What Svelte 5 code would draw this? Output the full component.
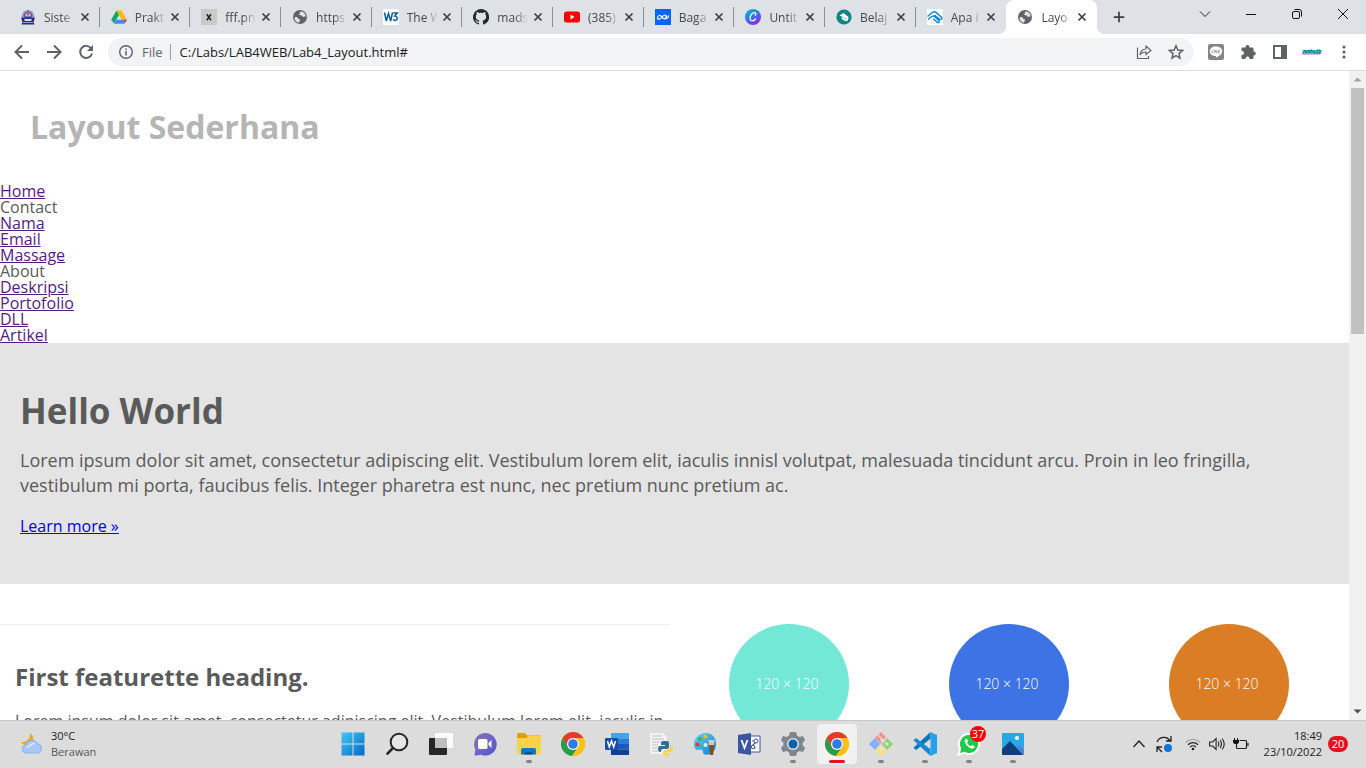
<script>
  const tabs = [
    { icon: 'crest', title: 'Siste' },
    { icon: 'drive', title: 'Prakt' },
    { icon: 'x', title: 'fff.pn' },
    { icon: 'globe', title: 'https' },
    { icon: 'w3', title: 'The W' },
    { icon: 'github', title: 'mads' },
    { icon: 'youtube', title: '(385)' },
    { icon: 'wave', title: 'Baga' },
    { icon: 'canva', title: 'Untit' },
    { icon: 'learn', title: 'Belaj' },
    { icon: 'clip', title: 'Apa i' },
    { icon: 'globe', title: 'Layo', active: true }
  ];

  const nav = [
    { label: 'Home', link: true },
    { label: 'Contact' },
    { label: 'Nama', link: true },
    { label: 'Email', link: true },
    { label: 'Massage', link: true },
    { label: 'About' },
    { label: 'Deskripsi', link: true },
    { label: 'Portofolio', link: true },
    { label: 'DLL', link: true },
    { label: 'Artikel', link: true }
  ];

  const circles = ['teal', 'blue', 'orange'];

  const apps = [
    { id: 'start', name: 'Start' },
    { id: 'search', name: 'Search' },
    { id: 'tasks', name: 'Task view' },
    { id: 'chat', name: 'Chat' },
    { id: 'files', name: 'File Explorer', open: true },
    { id: 'chrome', name: 'Chrome' },
    { id: 'word', name: 'Word' },
    { id: 'python', name: 'Python' },
    { id: 'paint', name: 'Paint' },
    { id: 'visio', name: 'Visio' },
    { id: 'settings', name: 'Settings', open: true },
    { id: 'chrome', name: 'Chrome window', open: true, active: true },
    { id: 'git', name: 'Git', open: true },
    { id: 'code', name: 'Code', open: true },
    { id: 'whatsapp', name: 'WhatsApp', open: true, badge: 37 },
    { id: 'photos', name: 'Photos', open: true }
  ];
</script>

{#snippet favicon(id)}
  <svg class="favicon" viewBox="0 0 16 16" aria-hidden="true">
    {#if id === 'crest'}
      <path d="M8 .5l2 1.200 2.500.8.8 2.500 1.200 2-1 3H2.500l-1-3 1.200-2 .8-2.500L6 1.700z" fill="#8f92bb" />
      <path d="M8 1.500l4 3.500v5H4V5z" fill="#5b5f9e" />
      <path d="M8 3l2.500 2.500V10h-5V5.500z" fill="#c9c8e0" />
      <path d="M7 3.500h2v3H7z" fill="#e2574c" />
      <path d="M1 8.500l3.500.5v3h7V9l3.500-.5-1.500 4.500 1 2.500h-13l1-2.500z" fill="#23287c" />
      <path d="M5 7.500h6V10H5z" fill="#2f3590" />
      <path d="M3 13.500h10" stroke="#c3c5df" stroke-width=".8" />
    {:else if id === 'drive'}
      <path d="M5.500 1.500h5L16 11h-5z" fill="#ffba00" />
      <path d="M5.500 1.500L8 6 3 14.500.2 10.700z" fill="#0da960" />
      <path d="M5.200 10.700H16l-2.700 4H3z" fill="#4688f4" />
      <path d="M12.900 10.700H16l-2 3.200z" fill="#ea4335" />
    {:else if id === 'x'}
      <path d="M0 0h16v16H0z" fill="#c9c9c9" />
      <path d="M5.800 5.200l4.200 6M10 5.200l-4.200 6" stroke="#222" stroke-width="1.500" />
    {:else if id === 'globe'}
      <circle cx="8" cy="8" r="7" fill="#5f6368" />
      <path d="M2.600 8.200c1.700-.4 3 .2 3.500 1.200.5.900 2.200.4 2 1.700-.1 1-1.200 1.300-1 2.300l-.5.4C4 13.200 2.300 11 2.600 8.200zM9 2.400c-1 .2-1.400.8-1 1.400.4.600-.9.900-.8 1.700.1.900 1.600.3 2.200 1 .7.900 1.900 1.800 3 1.100.6-.4 1.100-.2 1.300.3.3-2.700-1.700-5.300-4.700-5.500z" fill="#dee1e6" />
    {:else if id === 'w3'}
      <rect width="16" height="16" rx="1" fill="#fff" />
      <path d="M1.500 3.500l1.800 8.500 2.200-7.500 2.200 7.500 1.800-8.500M10.300 4h4l-2.500 3c3.200-.1 3.200 4.500.1 4.500-.9 0-1.400-.4-1.700-1.200" fill="none" stroke="#0f5c9a" stroke-width="1.500" />
    {:else if id === 'github'}
      <path d="M8 0a8 8 0 0 0-2.500 15.600c.4.100.5-.2.500-.4v-1.500c-2.200.5-2.700-1-2.700-1-.4-.9-.9-1.200-.9-1.200-.7-.5.100-.5.100-.5.800.1 1.200.8 1.200.8.7 1.200 1.900.9 2.300.7.100-.5.300-.9.500-1.100-1.800-.2-3.600-.9-3.600-4 0-.9.300-1.600.8-2.200-.1-.2-.4-1 .1-2.100 0 0 .7-.2 2.200.8a7.700 7.700 0 0 1 4 0c1.500-1 2.200-.8 2.200-.8.500 1.100.2 1.900.1 2.100.5.600.8 1.300.8 2.200 0 3.100-1.800 3.800-3.600 4 .3.200.5.700.5 1.500v2.300c0 .2.200.5.600.4A8 8 0 0 0 8 0z" fill="#24292f" />
    {:else if id === 'youtube'}
      <rect y="2.500" width="16" height="11" rx="2.500" fill="#f00" />
      <path d="M6.500 5.500v5l4-2.500z" fill="#fff" />
    {:else if id === 'wave'}
      <path d="M0 0h16v16H0z" fill="#0765ff" />
      <path d="M2.300 9.300C2.800 6.300 5 5.500 6.300 7.300 7.500 9 8.200 10 9.700 9.900c2-.1 3.500-1 4-3.100M2.300 9.300c1 1.500 2.800.9 3.800-.2L8.500 6.700c1-1 2.500-1 3 .3.300.8-.5 1.500-1.200 1" fill="none" stroke="#fff" stroke-width="1.200" stroke-linecap="round" />
    {:else if id === 'canva'}
      <defs><linearGradient id="canva-fill" x2=".6" y2="1"><stop stop-color="#00c4cc" /><stop offset=".5" stop-color="#2f7be5" /><stop offset="1" stop-color="#8b2be8" /></linearGradient></defs>
      <circle cx="8" cy="8" r="8" fill="url(#canva-fill)" />
      <path d="M10.300 6.200c1.200-1.600.3-2.800-1.300-2.500-2.600.5-4.400 3.700-3.800 6.400.5 2.500 3.600 2.500 5.300-.2" fill="none" stroke="#fff" stroke-width="1.300" stroke-linecap="round" />
    {:else if id === 'learn'}
      <circle cx="8" cy="8" r="7.600" fill="#0e8484" />
      <path d="M3.500 6.500l4-2.500 5 4-.5 3.500-2.500.8-4-2.500.5-2z" fill="#fff" />
      <path d="M5.500 7.500l5 3" stroke="#0e8484" stroke-width=".5" />
    {:else if id === 'clip'}
      <path d="M0 0h16v16H0z" fill="#fff" />
      <path d="M.5 7.500L5.500 3.300c1.300-1 2.500-.8 3.800.3l5 4.400c1.400 1.500-.5 3.300-2 2L7.500 6M1 10.500l3.700-3c1.100-.8 2.100-.7 3 .1l4.300 4.200c.8 1.300-.8 2.500-1.900 1.500L6.200 9.700" fill="none" stroke="#168bd2" stroke-width="1.500" />
    {/if}
  </svg>
{/snippet}

{#snippet appIcon(id)}
  <svg class="app-icon" viewBox="0 0 24 24" aria-hidden="true">
    {#if id === 'start'}
      <defs><linearGradient id="win" x2="1" y2="1"><stop stop-color="#3fc8f8" /><stop offset="1" stop-color="#0467c8" /></linearGradient></defs>
      <path d="M.5.500h11v11H.500zM12.500.500h11v11h-11zM.5 12.500h11v11H.500zM12.500 12.500h11v11h-11z" fill="url(#win)" />
    {:else if id === 'search'}
      <circle cx="14" cy="10" r="8.300" fill="#e6e6e6" stroke="#262626" stroke-width="2" />
      <path d="M8 16l-5.500 5.700" stroke="#262626" stroke-width="2.600" stroke-linecap="round" />
    {:else if id === 'tasks'}
      <rect y="6" width="18" height="17" rx="1" fill="#272727" />
      <rect x="6" y="1" width="18" height="15" rx="1" fill="#fff" opacity=".88" />
      <path d="M6 6h12v10H6z" fill="#bebebe" />
    {:else if id === 'chat'}
      <defs><linearGradient id="chat" x2="1" y2="1"><stop stop-color="#8d6fa9" /><stop offset=".45" stop-color="#7166c6" /><stop offset="1" stop-color="#4f55c8" /></linearGradient></defs>
      <path d="M12 1a11.300 11.300 0 1 1-4 21.700l-6.500 1 .9-6A11.300 11.300 0 0 1 12 1z" fill="url(#chat)" />
      <rect x="5" y="7" width="9.500" height="10" rx="1.500" fill="#fff" />
      <path d="M15.500 11l3-3v8l-3-3z" fill="#fff" />
    {:else if id === 'files'}
      <path d="M0 2.500Q0 1 1.500 1H8l2 2.500h14V7H0z" fill="#dda106" />
      <path d="M0 6h9l2-2h12q1 0 1 1v16.500q0 1-1 1H1q-1 0-1-1z" fill="#ffd04a" />
      <path d="M4 22.500V18q0-2 2-2h11q2 0 2 2v4.500z" fill="#1277c8" />
      <path d="M7.500 22.500V20h8v2.500z" fill="#075597" />
    {:else if id === 'chrome'}
      <circle cx="12" cy="12" r="12" fill="#fbc116" />
      <path d="M12 12L6.600 15.100 1.600 6A12 12 0 0 1 22.400 6H12z" fill="#e33b2e" />
      <path d="M12 12L6.800 15 1.600 6A12 12 0 0 0 11 24l6.200-9z" fill="#279c4c" />
      <path d="M12 12V6h10.400A12 12 0 0 1 11 24l6.200-9z" fill="#fbc116" />
      <circle cx="12" cy="12" r="6" fill="#fff" /><circle cx="12" cy="12" r="4.800" fill="#2d7be9" />
    {:else if id === 'word'}
      <path d="M6 1h18v5.500H6z" fill="#41a5ee" /><path d="M6 6.500h18V12H6z" fill="#2b7cd3" /><path d="M6 12h18v5.500H6z" fill="#185abd" /><path d="M6 17.500h18V23H6z" fill="#103f91" />
      <rect y="6" width="13" height="12" rx="1" fill="#174ea6" />
      <path d="M2.500 9l1.800 6 2.200-6 2.200 6 1.800-6" fill="none" stroke="#fff" stroke-width="1.500" />
    {:else if id === 'python'}
      <path d="M1 1h13l4 4v17H1z" fill="#f2f2f2" />
      <path d="M3 4h10M3 7h12M3 10h8M3 13h6M3 16h5M3 19h7" stroke="#c0c0c0" stroke-width="1" />
      <path d="M14 9h4q2 0 2 2v4q0 2-2 2h-4q-2 0-2 2v1h-1q-2-.5-2-3.500T11 14h5v-1h-4v-2q0-2 2-2z" fill="#2f6c9f" />
      <path d="M21 13h1q2 .5 2 3.500T22 20h-5v1h4v1q0 2-3 2t-4-2v-2q0-2 2-2h3q2 0 2-2z" fill="#ffd342" />
    {:else if id === 'paint'}
      <defs><linearGradient id="paint" x2="1" y2="1"><stop stop-color="#60d8f5" /><stop offset="1" stop-color="#127bcd" /></linearGradient></defs>
      <path d="M13 1C6 1 1 6 1 12c0 4 1.500 6.500 4.500 5.800 3-.8 4.500 0 4.500 2.200 0 2.500 2 3 5 2.600 5-.8 8-5 8-10.600C23 5.500 19 1 13 1z" fill="url(#paint)" />
      <circle cx="12.500" cy="4.500" r="2" fill="#f5b526" /><circle cx="7" cy="7" r="2" fill="#54a63d" /><circle cx="4.500" cy="12.500" r="2" fill="#df3f32" /><circle cx="12.500" cy="13" r="2" fill="#dff3fb" />
      <path d="M16 8h5v6h-5z" fill="#e8c796" /><path d="M15.500 8h6v2.500h-6z" fill="#c9ced1" /><path d="M16 13h5l-.8 10h-3z" fill="#854d1c" />
    {:else if id === 'visio'}
      <path d="M12 4h11v16H12z" fill="#fff" stroke="#4256a2" />
      <path d="M15 9h4M15 14l4-4M15 16h4" stroke="#4256a2" stroke-width="1.200" /><circle cx="19" cy="9" r="2" fill="#fff" stroke="#4256a2" /><circle cx="16" cy="15" r="1.700" fill="#fff" stroke="#4256a2" />
      <path d="M1 3l13-2v22L1 21z" fill="#3955a3" />
      <path d="M4.500 8l3 8 3-8" fill="none" stroke="#fff" stroke-width="1.800" />
    {:else if id === 'settings'}
      <path d="M9 0h6l1 3.500 2.500 1.400L22 4l2 4-2.500 3v2l2.500 3-2 4-3.500-.9-2.500 1.400L15 24H9l-1-3.500-2.500-1.400L2 20l-2-4 2.500-3v-2L0 8l2-4 3.500.9L8 3.500z" fill="#7d868d" />
      <circle cx="12" cy="12" r="6" fill="#d9e3e9" /><circle cx="12" cy="12" r="4.500" fill="#0962a9" />
    {:else if id === 'git'}
      <path d="M12 0l5 5-4 4 3 3-2 2-8-8z" fill="#fa8d86" /><path d="M6 6l5 6-5 6-6-6z" fill="#80b2ff" /><path d="M18 6l6 6-6 6-5-6z" fill="#8fd27b" /><path d="M12 13l6 5-6 6-6-6z" fill="#ffe07c" />
      <path d="M9 3l4 4v10M13 8l5 4" fill="none" stroke="#ddd" stroke-width="1.300" /><circle cx="13" cy="8" r="1.600" fill="#e5e5e5" /><circle cx="18" cy="12" r="1.600" fill="#e5e5e5" /><circle cx="12" cy="17" r="1.600" fill="#e5e5e5" />
    {:else if id === 'code'}
      <path d="M17.500 0v6.800L3 18l-2.500-2.300L17.500 0z" fill="#0877bd" />
      <path d="M.5 8.300L3 6l14.500 11.300V24z" fill="#108bd4" />
      <path d="M17.500 0L24 3v18l-6.500 3z" fill="#27a0ef" />
    {:else if id === 'whatsapp'}
      <path d="M12 1a11 11 0 1 1-5 20.800L0 24l2-7A11 11 0 0 1 12 1z" fill="#fff" />
      <path d="M12 3a9 9 0 1 1-4.500 16.800L3 21l1.200-4.500A9 9 0 0 1 12 3z" fill="#25c84b" />
      <path d="M8.300 7c-3 3 4.500 11 8.200 9.300 1.500-.8 1.200-2 .6-2.400l-1.900-1c-.9.2-1 1.400-2 1-1.500-.7-2.500-1.900-3-3 0-.8 1-1.100.8-1.900L10 7.100C9.600 6.500 8.900 6.500 8.300 7z" fill="#fff" />
    {:else if id === 'photos'}
      <rect x="1" y="1" width="22" height="22" rx="1" fill="#27a9e9" />
      <path d="M11 20l7-7 5 5v4H10z" fill="#4d82d5" />
      <path d="M1 17L9 9l13 14H2q-1 0-1-1z" fill="#123f7c" /><circle cx="16" cy="6" r="2" fill="#fff" />
    {/if}
  </svg>
{/snippet}

<div class="screen">
  <header class="tabstrip">
    <div class="tabs">
      {#each tabs as tab, i}
        <div class="tab" class:active={tab.active} class:before={i === tabs.length - 2}>
          {@render favicon(tab.icon)}
          <span class="tab-title">{tab.title}</span>
          <button class="close" aria-label="Close tab">
            <svg viewBox="0 0 16 16"><path d="M4.500 4.500l7 7M11.500 4.500l-7 7" stroke="#3c4043" stroke-width="1.700" /></svg>
          </button>
        </div>
      {/each}
    </div>
    <button class="new-tab" aria-label="New tab"><svg viewBox="0 0 16 16"><path d="M8 2v12M2 8h12" stroke="#3c4043" stroke-width="2" /></svg></button>
    <div class="window-controls">
      <button aria-label="Search tabs"><svg viewBox="0 0 16 16"><path d="M3 5.500l5 5 5-5" fill="none" stroke="#222" /></svg></button>
      <button aria-label="Minimize"><svg viewBox="0 0 16 16"><path d="M3 8.500h10" stroke="#111" /></svg></button>
      <button aria-label="Restore"><svg viewBox="0 0 16 16"><rect x="3.500" y="5.500" width="7" height="7" rx="1.500" fill="none" stroke="#111" /><path d="M5.500 3.500H10q2.500 0 2.500 2.500v4.500" fill="none" stroke="#111" /></svg></button>
      <button aria-label="Close window"><svg viewBox="0 0 16 16"><path d="M3 3l10 10M13 3L3 13" stroke="#111" /></svg></button>
    </div>
  </header>

  <div class="toolbar">
    <div class="nav-buttons">
      <button aria-label="Back"><svg viewBox="0 0 16 16"><path d="M15 8H2M8 1.500L1.500 8 8 14.500" fill="none" stroke="#5f6368" stroke-width="2" /></svg></button>
      <button aria-label="Forward"><svg viewBox="0 0 16 16"><path d="M1 8h13M8 1.500L14.500 8 8 14.500" fill="none" stroke="#5f6368" stroke-width="2" /></svg></button>
      <button aria-label="Reload"><svg viewBox="0 0 16 16"><path d="M13.200 4.500A6 6 0 1 0 14 9.500" fill="none" stroke="#5f6368" stroke-width="2" /><path d="M15 1v6H9z" fill="#5f6368" /></svg></button>
    </div>
    <div class="omnibox">
      <svg viewBox="0 0 16 16" aria-hidden="true"><circle cx="8" cy="8" r="6.300" fill="none" stroke="#5f6368" stroke-width="1.400" /><path d="M8 7v4.500M8 4.500V6" stroke="#5f6368" stroke-width="1.500" /></svg>
      <span class="scheme">File</span>
      <input aria-label="Address" value="C:/Labs/LAB4WEB/Lab4_Layout.html#" />
      <button aria-label="Share"><svg viewBox="0 0 16 16"><path d="M1.500 3.500v11h11V12" fill="none" stroke="#5f6368" stroke-width="1.200" /><path d="M4 11c.5-4 2.500-6 6-6V2l5 4.500L10 10.500V8c-3 0-4.500.5-6 3z" fill="none" stroke="#5f6368" stroke-width="1.100" /></svg></button>
      <button aria-label="Bookmark"><svg viewBox="0 0 16 16"><path d="M8 1.800l1.800 4.300 4.700.4-3.500 3.100 1 4.500L8 11.700l-4 2.400 1-4.500-3.500-3.100 4.700-.4z" fill="none" stroke="#5f6368" stroke-width="1.500" /></svg></button>
    </div>
    <div class="extensions">
      <button aria-label="Line"><svg viewBox="0 0 16 16"><rect width="16" height="16" rx="2" fill="#858585" /><path d="M8 2.500c4 0 6.300 2.200 6.300 5 0 3-4.300 5-6.300 6.300v-1.700C4.200 12 1.700 10 1.700 7.400 1.700 4.500 4.500 2.500 8 2.500z" fill="#fff" /><path d="M4 6v3h1.300M6.200 6v3M7.300 9V6l1.600 3V6M12 6h-1.500v3H12M10.500 7.500H12" fill="none" stroke="#858585" stroke-width=".6" /></svg></button>
      <button aria-label="Extensions"><svg viewBox="0 0 16 16"><path d="M1.500 4.500q0-1 1-1h3V3a2 2 0 0 1 4 0v.5h3q1 0 1 1v3h.300a2 2 0 0 1 0 4h-.3V14q0 1-1 1H9.500v-.5a2 2 0 0 0-4 0v.5h-3q-1 0-1-1v-3H2a2 2 0 0 0 0-4h-.500z" fill="#5f6368" /></svg></button>
      <button aria-label="Side panel"><svg viewBox="0 0 16 16"><path d="M1 1h14v14H1zM3 3v10h6V3z" fill="#5f6368" fill-rule="evenodd" /></svg></button>
      <button class="profile" aria-label="Profile"><svg viewBox="0 0 20 16"><path d="M1 6h19l-1 4H0z" fill="#35cbd4" /><path d="M1 9l2-3 1 3 2-3 1 3M8 9V6h2v3M12 6v3h2M15 9V6h3v3z" fill="none" stroke="#255d66" stroke-width=".8" /><path d="M0 10.500h18" stroke="#b87386" stroke-width=".5" /></svg></button>
      <button aria-label="Menu"><svg viewBox="0 0 16 16"><g fill="#5f6368"><circle cx="8" cy="3" r="1.600" /><circle cx="8" cy="8" r="1.600" /><circle cx="8" cy="13" r="1.600" /></g></svg></button>
    </div>
  </div>

  <div class="viewport">
    <div class="document">
      <header class="site-header"><h1>Layout Sederhana</h1></header>
      <nav>
        <ul>
          {#each nav as item}
            <li>{#if item.link}<a class="visited" href="#top">{item.label}</a>{:else}{item.label}{/if}</li>
          {/each}
        </ul>
      </nav>
      <section class="hero">
        <h1>Hello World</h1>
        <p>Lorem ipsum dolor sit amet, consectetur adipiscing elit. Vestibulum lorem elit, iaculis innisl volutpat, malesuada tincidunt arcu. Proin in leo fringilla, vestibulum mi porta, faucibus felis. Integer pharetra est nunc, nec pretium nunc pretium ac.</p>
        <a href="#more">Learn more »</a>
      </section>
      <main>
        <article>
          <h2>First featurette heading.</h2>
          <p>Lorem ipsum dolor sit amet, consectetur adipiscing elit. Vestibulum lorem elit, iaculis in</p>
        </article>
        <div class="boxes">
          {#each circles as colour}
            <div class="box"><div class="circle {colour}">120 × 120</div></div>
          {/each}
        </div>
      </main>
    </div>
    <div class="scrollbar" aria-hidden="true">
      <svg viewBox="0 0 17 17"><path d="M4.500 10.500h8l-4-4z" fill="#a3a3a3" /></svg>
      <div class="track"><div class="thumb"></div></div>
      <svg viewBox="0 0 17 17"><path d="M4.500 6.500h8l-4 4z" fill="#505050" /></svg>
    </div>
  </div>

  <footer class="taskbar">
    <button class="weather">
      <svg viewBox="0 0 24 24" aria-hidden="true"><path d="M10 1c5 3 4 9.500-1 11.500-3 1-6 .5-8-2.500C7 10.500 10.500 6.500 10 1z" fill="#f5a623" /><path d="M6.500 21a4 4 0 0 1-.5-8 6 6 0 0 1 11.300-1.500A5 5 0 0 1 18.500 21z" fill="#a9c8f6" stroke="#7da5e6" stroke-width=".8" /><path d="M7 16c1-3 3-2 3-2s2-4 5-2" fill="none" stroke="#dbe9ff" stroke-width="1.500" /></svg>
      <span class="weather-text"><span>30°C</span><span class="muted">Berawan</span></span>
    </button>
    <div class="apps">
      {#each apps as app}
        <button class="app" class:open={app.open} class:current={app.active} aria-label={app.name}>
          {@render appIcon(app.id)}
          {#if app.badge}<span class="badge">{app.badge}</span>{/if}
        </button>
      {/each}
    </div>
    <div class="tray">
      <button aria-label="Hidden icons"><svg viewBox="0 0 16 16"><path d="M2.500 11L8 5l5.500 6" fill="none" stroke="#222" stroke-width="1.300" /></svg></button>
      <button class="update" aria-label="Update"><svg viewBox="0 0 18 18"><path d="M2 7a7.500 7.500 0 0 1 13-1.500M16 1v5h-5M2 17v-5h5M2.500 12.500L7 17" fill="none" stroke="#222" stroke-width="1.300" /><circle cx="13" cy="13" r="4" fill="#0878d4" /></svg></button>
      <button class="status" aria-label="Network, volume and battery">
        <svg viewBox="0 0 16 16"><path d="M.8 6.500a10 10 0 0 1 14.400 0" fill="none" stroke="#aaa" stroke-width="1.200" /><path d="M3 8.800a7 7 0 0 1 10 0M5.200 11a4 4 0 0 1 5.600 0" fill="none" stroke="#222" stroke-width="1.300" /><circle cx="8" cy="13" r="1.300" fill="#222" /></svg>
        <svg viewBox="0 0 16 16"><path d="M.6 6h3l3.500-3.500v11L3.600 10h-3zM9 5.500q1.800 2.500 0 5M11 4q3 4 0 8M13 2.500q4.500 5.500 0 11" fill="none" stroke="#222" stroke-width="1.100" /></svg>
        <svg viewBox="0 0 16 16"><path d="M6.500 4.500h6q1 0 1 1v6q0 1-1 1h-8q-1 0-1-1V8M15 7v3" fill="none" stroke="#222" stroke-width="1.200" /><path d="M0 4h6v2.500L4.500 8h-3L0 6.500zM1 2h1v2H1zM4 2h1v2H4z" fill="#111" /></svg>
      </button>
      <button class="clock"><span>18:49</span><span>23/10/2022</span></button>
      <button class="notices" aria-label="Notifications">20</button>
    </div>
  </footer>
</div>

<style>
  :global(body) { margin: 0; }
  .screen { height: 100vh; display: flex; flex-direction: column; overflow: hidden; background: #fff; font-family: "Open Sans", sans-serif; }
  .screen * { box-sizing: border-box; }
  button { border: 0; padding: 0; background: none; font: inherit; color: inherit; display: flex; align-items: center; justify-content: center; flex: none; }
  svg { display: block; width: 16px; height: 16px; flex: none; }
  h1, h2, p, ul { margin: 0; padding: 0; }

  .tabstrip { flex: none; height: 34px; display: flex; background: #dee1e6; padding-left: 9px; }
  .tabs { flex: 1; min-width: 0; display: flex; }
  .tab { position: relative; flex: 1; min-width: 0; display: flex; align-items: center; padding: 0 7px 0 11px; font-family: "Open Sans", sans-serif; font-size: 12px; color: #45494d; }
  .tab::after { content: ""; position: absolute; right: 0; top: 7px; width: 1px; height: 20px; background: #8a8d91; }
  .tab.before::after { display: none; }
  .tab.active { background: #fff; border-radius: 8px 8px 0 0; }
  .tab.active::after { right: -8px; top: 26px; width: 8px; height: 8px; background: radial-gradient(circle at 100% 0, transparent 8px, #fff 8px); }
  .tab.active::before { content: ""; position: absolute; left: -8px; top: 26px; width: 8px; height: 8px; background: radial-gradient(circle at 0 0, transparent 8px, #fff 8px); }
  .tab-title { flex: 1; min-width: 0; margin-left: 8px; white-space: nowrap; -webkit-mask-image: linear-gradient(90deg, #000 18px, transparent 31px); mask-image: linear-gradient(90deg, #000 18px, transparent 31px); }
  .new-tab { width: 28px; margin-left: 8px; }
  .new-tab svg { width: 14px; height: 14px; }
  .window-controls { display: flex; height: 28px; margin-left: 49px; }
  .window-controls button { width: 46px; }

  .toolbar { flex: none; height: 37px; display: flex; align-items: center; background: #fff; border-bottom: 1px solid #d9dbde; padding: 0 6px; font-size: 14px; }
  .nav-buttons { display: flex; }
  .nav-buttons button, .omnibox button, .extensions button { width: 32px; height: 28px; }
  .omnibox { flex: 1; min-width: 0; height: 28px; display: flex; align-items: center; margin: 0 6px; padding: 0 2px 0 10px; border-radius: 14px; background: #f1f3f4; font-family: "Open Sans", sans-serif; font-size: 13px; }
  .scheme { color: #5f6368; margin-left: 8px; padding-right: 7px; border-right: 1px solid #9aa0a6; line-height: 16px; }
  .omnibox input { flex: 1; min-width: 0; border: 0; padding: 0; margin-left: 9px; background: none; color: #202124; font: inherit; outline: 0; }
  .extensions { display: flex; }
  .profile svg { width: 20px; }

  .viewport { flex: 1; min-height: 0; display: flex; overflow: hidden; }
  .document { flex: 1; min-width: 0; overflow: hidden; color: #5a5a5a; font-size: 16px; line-height: 16px; font-weight: 400; }
  .site-header { padding: 20px; }
  .site-header h1 { margin: 20px 10px; font-size: 32px; line-height: 32px; font-weight: 700; color: #b5b5b5; }
  ul { list-style: none; }
  .visited { color: #551a8b; }
  .hero { background: #e4e4e4; padding: 50px 20px; }
  .hero h1 { margin-bottom: 20px; font-size: 35px; line-height: 35px; font-weight: 700; }
  .hero p { margin-bottom: 20px; font-size: 18px; line-height: 25px; }
  .hero a { display: block; color: #00e; }
  main { display: flex; gap: 10px; margin-top: 40px; padding-right: 10px; }
  article { flex: 669; min-width: 0; border-top: 1px solid #eee; }
  article h2 { margin: 40px 15px 20px; font-size: 24px; line-height: 24px; font-weight: 700; }
  article p { margin: 0 0 20px 15px; line-height: 24px; white-space: nowrap; }
  .boxes { flex: 660; min-width: 0; display: flex; }
  .box { flex: 1; display: flex; justify-content: center; }
  .circle { width: 120px; height: 120px; border-radius: 50%; display: flex; align-items: center; justify-content: center; padding-right: 4px; color: #fff; font-size: 14px; font-weight: 300; }
  .teal { background: #73e8d6; }
  .blue { background: #3e73e5; }
  .orange { background: #da7d25; }

  .scrollbar { flex: none; width: 17px; display: flex; flex-direction: column; background: #f1f1f1; }
  .scrollbar svg { width: 17px; height: 17px; }
  .track { flex: 1; padding: 0 2px; }
  .thumb { height: 40%; background: #c1c1c1; }

  .taskbar { flex: none; height: 48px; display: grid; grid-template-columns: 1fr auto 1fr; background: #dcdcdc; box-shadow: inset 0 1px #c9c9c9; font-family: "Open Sans", sans-serif; font-size: 11px; line-height: 16px; color: #1b1b1b; }
  .weather { justify-self: start; padding-left: 20px; }
  .weather svg { width: 24px; height: 24px; }
  .weather-text { display: flex; flex-direction: column; align-items: flex-start; margin-left: 7px; }
  .muted { color: #555; }
  .apps { display: flex; align-items: center; gap: 4px; }
  .app { position: relative; width: 40px; height: 40px; border-radius: 4px; }
  .app-icon { width: 24px; height: 24px; }
  .app.open::after { content: ""; position: absolute; left: 17px; bottom: 1px; width: 6px; height: 3px; border-radius: 2px; background: #858585; }
  .app.current { background: #f1f1f1; }
  .app.current::after { left: 12px; width: 16px; background: #e81123; }
  .badge { position: absolute; right: 3px; top: 2px; width: 16px; height: 16px; border-radius: 50%; background: #f00; color: #fff; font-size: 11px; text-align: center; }
  .tray { display: flex; align-items: center; justify-content: flex-end; padding-right: 18px; }
  .update { margin-left: 8px; }
  .update svg { width: 18px; height: 18px; }
  .status { gap: 8px; margin-left: 12px; }
  .clock { flex-direction: column; align-items: flex-end; margin-left: 15px; }
  .notices { width: 20px; height: 16px; margin-left: 6px; border-radius: 8px; background: #e81123; color: #fff; }
</style>
